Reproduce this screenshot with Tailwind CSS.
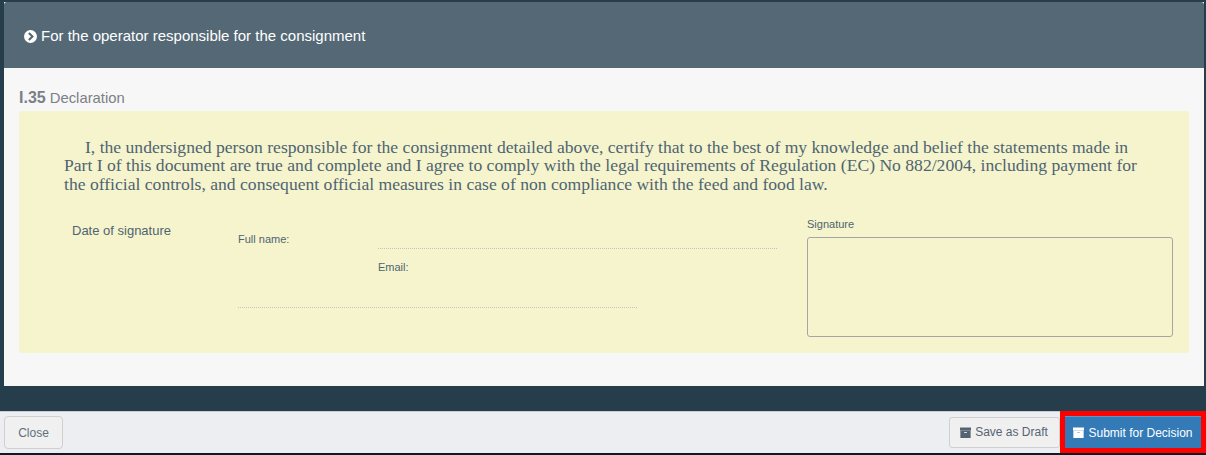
<!DOCTYPE html>
<html lang="en">
<head>
  <meta charset="UTF-8">
  <title>Declaration</title>
  <script src="https://cdn.jsdelivr.net/npm/@tailwindcss/browser@4"></script>
</head>
<body class="bg-[#263d4c] font-['Liberation_Sans',Arial,sans-serif] overflow-hidden">
  <div class="w-[1206px] h-[455px] flex flex-col">
    <!-- Panel -->
    <div class="ml-[4px] mr-[2px] mt-[2px] h-[384px] bg-[#f7f7f7] flex flex-col">
      <div class="h-[66px] bg-[#546875] rounded-t-[3px] flex items-center pl-[20px] pt-[2px] gap-[4px] text-white text-[15px] shrink-0">
        <svg class="w-[13px] h-[13px]" viewBox="0 0 16 16"><circle cx="8" cy="8" r="8" fill="#fff"/><path d="M6 3.6 10.4 8 6 12.4" fill="none" stroke="#546875" stroke-width="2.6"/></svg>
        <span>For the operator responsible for the consignment</span>
      </div>
      <div class="px-[15px] pt-[21px]">
        <div class="text-[14.8px] leading-[18px] text-[#7b7f86] mb-[4px]"><b class="text-[16px]">I.35</b> Declaration</div>
        <div class="h-[242px] bg-[#f6f4cc] rounded-[3px] pl-[45px] pr-[16px] pt-[27px] text-[#4e6473]">
          <p class="font-['Liberation_Serif',serif] text-[17.6px] leading-[18.4px] indent-[21px] pr-[30px]">I, the undersigned person responsible for the consignment detailed above, certify that to the best of my knowledge and belief the statements made in Part I of this document are true and complete and I agree to comply with the legal requirements of Regulation (EC) No 882/2004, including payment for the official controls, and consequent official measures in case of non compliance with the feed and food law.</p>
          <div class="flex mt-[21px]">
            <div class="w-[174px] pl-[8px] pt-[9px] text-[13px] leading-[16px] shrink-0">Date of signature</div>
            <div class="w-[569px] shrink-0 pt-[17px] text-[11px] leading-[14px]">
              <div class="flex items-end h-[18px]">
                <span class="w-[140px] pb-[3px]">Full name:</span>
                <span class="w-[399px] border-b border-dotted border-[#c0c4c4]"></span>
              </div>
              <div class="pl-[140px] mt-[11px]">Email:</div>
              <div class="w-[399px] h-[34px] border-b border-dotted border-[#c0c4c4]"></div>
            </div>
            <div class="flex-1">
              <div class="text-[11px] leading-[14px] mt-[3px] mb-[6px]">Signature</div>
              <div class="h-[100px] border border-[#a5a5a5] rounded-[3px]"></div>
            </div>
          </div>
        </div>
      </div>
    </div>
    <!-- Footer -->
    <div class="mt-[25px] h-[42px] bg-[#edeef2] border-t border-[#c9ccce] flex items-center justify-between pl-[4px]">
      <button class="h-[33px] w-[59px] bg-[#f0f0f0] border border-[#cfcfcf] rounded-[4px] text-[12px] text-[#5c7080]">Close</button>
      <div class="flex items-center self-start -mt-[1px]">
        <button class="h-[31px] w-[111px] bg-[#f0f0f0] border border-[#cfcfcf] rounded-[3px] text-[12px] text-[#566472] flex items-center justify-center gap-[4px] pr-[1px]">
          <svg class="w-[11px] h-[11px]" viewBox="0 0 12 12"><path d="M0 .5h12v3.2H0zM.4 4.2h11.2V12H.4z" fill="#566472"/><path d="M4.5 6h3" stroke="#f0f0f0" stroke-width="1"/></svg>
          <span>Save as Draft</span>
        </button>
        <div class="w-[146px] h-[42px] border-[5px] border-[#ff0000] flex">
          <button class="flex-1 bg-[#337ab7] border-t border-[#5f97c6] text-white text-[12px] flex items-center justify-center gap-[4px]">
            <svg class="w-[11px] h-[11px]" viewBox="0 0 12 12"><path d="M0 .5h12v3.2H0zM.4 4.2h11.2V12H.4z" fill="#fff"/><path d="M4.5 6h3" stroke="#9dbedb" stroke-width="1"/></svg>
            <span>Submit for Decision</span>
          </button>
        </div>
      </div>
    </div>
    <div class="h-[2px] bg-[#0c1a24]"></div>
  </div>
</body>
</html>
